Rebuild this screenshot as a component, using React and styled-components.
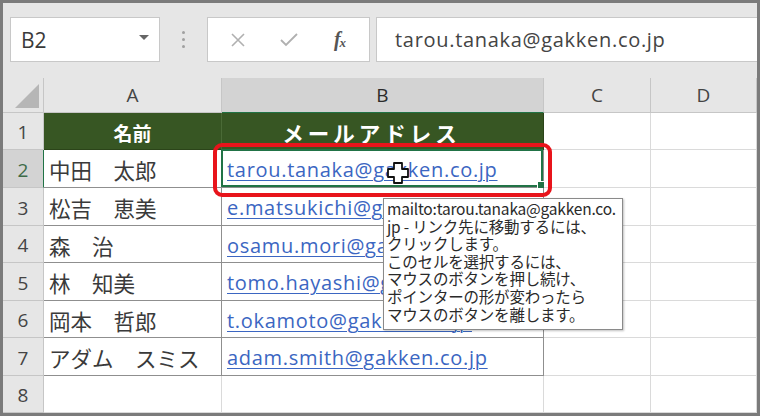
import React from 'react';
import styled, { createGlobalStyle } from 'styled-components';

const GlobalStyle = createGlobalStyle`
  html, body {
    margin: 0;
    padding: 0;
    background: #ffffff;
  }
  * {
    box-sizing: border-box;
  }
`;

const Frame = styled.div`
  width: 760px;
  height: 416px;
  border: 3px solid #7b7b7b;
  background: #e6e6e6;
  display: flex;
  flex-direction: column;
  overflow: hidden;
  font-family: "Open Sans", "Noto Sans CJK JP", sans-serif;
`;

const Toolbar = styled.div`
  height: 75px;
  flex: none;
  display: flex;
  align-items: flex-start;
  padding: 14px 0 0 7px;
`;

const NameBox = styled.div`
  width: 150px;
  height: 45px;
  background: #fff;
  border: 1px solid #c8c8c8;
  display: flex;
  align-items: center;
  justify-content: space-between;
  padding: 0 10px 0 10px;
  font-size: 21px;
  color: #3a3a3a;
`;

const Caret = styled.span`
  width: 0;
  height: 0;
  border-left: 5px solid transparent;
  border-right: 5px solid transparent;
  border-top: 5px solid #666;
  margin-top: -4px;
`;

const Dots = styled.div`
  width: 47px;
  height: 45px;
  display: flex;
  flex-direction: column;
  align-items: center;
  justify-content: center;
  gap: 4px;

  span {
    width: 3px;
    height: 3px;
    border-radius: 50%;
    background: #a0a0a0;
  }
`;

const FuncBox = styled.div`
  width: 163px;
  height: 45px;
  background: #fff;
  border: 1px solid #c8c8c8;
  display: grid;
  grid-template-columns: 1fr 1fr 1fr;
  align-items: center;
  justify-items: center;
  padding: 0 4px;
`;

const Fx = styled.span`
  font-family: "Liberation Serif", serif;
  font-style: italic;
  font-weight: bold;
  font-size: 20px;
  color: #555;
  letter-spacing: -1px;

  sub {
    font-size: 13px;
    vertical-align: -1px;
  }
`;

const FormulaInput = styled.div`
  flex: 1;
  height: 45px;
  margin-left: 6px;
  background: #fff;
  border-top: 1px solid #c8c8c8;
  border-bottom: 1px solid #c8c8c8;
  border-left: 1px solid #c8c8c8;
  display: flex;
  align-items: center;
  padding-left: 18px;
  font-size: 20px;
  letter-spacing: 0.7px;
  color: #444;
`;

const SheetWrap = styled.div`
  position: relative;
  flex: 1;
`;

const Grid = styled.div`
  display: grid;
  grid-template-columns: 41px 178px 322px 107px 1fr;
  grid-template-rows: 35px 37px 38px 38px 37px 38px 37px 38px 37px;
  background: #fff;
  height: 100%;
`;

const Corner = styled.div`
  background: #e6e6e6;
  border-right: 1px solid #c6c6c6;
  border-bottom: 1px solid #c6c6c6;
  position: relative;

  &::after {
    content: '';
    position: absolute;
    right: 4px;
    bottom: 4px;
    width: 24px;
    height: 24px;
    background: #b6b6b6;
    clip-path: polygon(100% 0, 100% 100%, 0 100%);
  }
`;

const ColHeader = styled.div`
  background: ${p => (p.$selected ? '#d3d3d3' : '#e6e6e6')};
  border-right: 1px solid #c6c6c6;
  border-bottom: 1px solid ${p => (p.$selected ? '#217346' : '#c6c6c6')};
  display: flex;
  align-items: center;
  justify-content: center;
  font-size: 19px;
  color: ${p => (p.$selected ? '#2b2b2b' : '#444')};
`;

const RowHeader = styled.div`
  background: ${p => (p.$selected ? '#d3d3d3' : '#e6e6e6')};
  border-right: 1px solid ${p => (p.$selected ? '#217346' : '#c6c6c6')};
  border-bottom: 1px solid #c6c6c6;
  display: flex;
  align-items: center;
  justify-content: center;
  font-size: 19px;
  color: ${p => (p.$selected ? '#3d6b48' : '#444')};
  padding-top: 2px;
`;

const HeadCell = styled.div`
  background: #375623;
  border-right: 1px solid ${p => (p.$last ? '#2b4419' : '#4a6a36')};
  border-bottom: 1px solid #2b4419;
  display: flex;
  align-items: center;
  justify-content: center;
  color: #fff;
  font-family: "Noto Sans CJK JP", sans-serif;
  font-weight: bold;
  font-size: ${p => p.$size || 19}px;
  padding: 2px ${p => p.$shift || 0}px 0 0;

  span {
    letter-spacing: ${p => p.$spacing || 0}px;
    margin-right: -${p => p.$spacing || 0}px;
  }
`;

const Cell = styled.div`
  background: #fff;
  border-right: 1px solid ${p => (p.$table ? '#8f8f8f' : '#dadada')};
  border-bottom: 1px solid ${p => (p.$table ? '#8f8f8f' : '#dadada')};
  display: flex;
  align-items: center;
  padding-left: 5px;
  padding-top: 2px;
  white-space: nowrap;
  overflow: visible;
  position: relative;
`;

const NameText = styled.span`
  font-family: "Noto Sans CJK JP", sans-serif;
  font-size: 21.5px;
  color: #3a3a3a;
`;

const LinkText = styled.span`
  font-family: "Open Sans", "Noto Sans CJK JP", sans-serif;
  font-size: 20px;
  letter-spacing: 0.7px;
  color: #3b66c2;
  text-decoration: underline;
  text-underline-offset: 3px;
  text-decoration-thickness: 1px;
`;

const Selection = styled.div`
  position: absolute;
  inset: -1px 0 0 -1px;
  border: 2px solid #217346;
  pointer-events: none;

  &::after {
    content: '';
    position: absolute;
    right: -5px;
    bottom: -5px;
    width: 7px;
    height: 7px;
    background: #217346;
    border: 1px solid #fff;
  }
`;

const Annotation = styled.div`
  position: absolute;
  left: 210px;
  top: 65px;
  width: 339px;
  height: 54px;
  border: 4px solid #e8141b;
  border-radius: 9px;
  pointer-events: none;
`;

const Cursor = styled.svg`
  position: absolute;
  left: 383px;
  top: 83px;
`;

const Tooltip = styled.div`
  position: absolute;
  left: 380px;
  top: 120px;
  width: 240px;
  height: 132px;
  background: #fff;
  border: 1px solid #8a8a8a;
  box-shadow: 1px 1px 2px rgba(0, 0, 0, 0.25);
  padding: 1px 0 0 3px;
  font-family: "Noto Sans CJK JP", sans-serif;
  font-size: 15.5px;
  line-height: 17.6px;
  color: #2a2a2a;
  white-space: pre;
  overflow: hidden;
  letter-spacing: -0.2px;
`;

const people = [
  ['中田　太郎', 'tarou.tanaka@gakken.co.jp'],
  ['松吉　恵美', 'e.matsukichi@gakken.co.jp'],
  ['森　治', 'osamu.mori@gakken.co.jp'],
  ['林　知美', 'tomo.hayashi@gakken.co.jp'],
  ['岡本　哲郎', 't.okamoto@gakken.co.jp'],
  ['アダム　スミス', 'adam.smith@gakken.co.jp'],
];

const tipLines = [
  'mailto:tarou.tanaka@gakken.co.',
  'jp - リンク先に移動するには、',
  'クリックします。',
  'このセルを選択するには、',
  'マウスのボタンを押し続け、',
  'ポインターの形が変わったら',
  'マウスのボタンを離します。',
];

export default function App() {
  return (
    <>
      <GlobalStyle />
      <Frame>
        <Toolbar>
          <NameBox>
            B2
            <Caret />
          </NameBox>
          <Dots>
            <span />
            <span />
            <span />
          </Dots>
          <FuncBox>
            <svg width="16" height="16" viewBox="0 0 16 16">
              <path d="M2 2 L14 14 M14 2 L2 14" stroke="#b0b0b0" strokeWidth="1.6" fill="none" />
            </svg>
            <svg width="20" height="16" viewBox="0 0 20 16">
              <path d="M2 8 L7 13 L18 2" stroke="#b0b0b0" strokeWidth="1.8" fill="none" />
            </svg>
            <Fx>
              f<sub>x</sub>
            </Fx>
          </FuncBox>
          <FormulaInput>tarou.tanaka@gakken.co.jp</FormulaInput>
        </Toolbar>
        <SheetWrap>
          <Grid>
            <Corner />
            <ColHeader>A</ColHeader>
            <ColHeader $selected>B</ColHeader>
            <ColHeader>C</ColHeader>
            <ColHeader>D</ColHeader>

            <RowHeader>1</RowHeader>
            <HeadCell>
              <span>名前</span>
            </HeadCell>
            <HeadCell $last $size={21.5} $spacing={4} $shift={26}>
              <span>メールアドレス</span>
            </HeadCell>
            <Cell />
            <Cell />

            {people.map(([name, mail], i) => (
              <React.Fragment key={mail}>
                <RowHeader $selected={i === 0}>{i + 2}</RowHeader>
                <Cell $table>
                  <NameText>{name}</NameText>
                </Cell>
                <Cell $table>
                  <LinkText>{mail}</LinkText>
                  {i === 0 && <Selection />}
                </Cell>
                <Cell />
                <Cell />
              </React.Fragment>
            ))}

            <RowHeader>8</RowHeader>
            <Cell />
            <Cell />
            <Cell />
            <Cell />
          </Grid>
          <Annotation />
          <Cursor width="24" height="24" viewBox="0 0 24 24">
            <path
              d="M8 2 H16 V8 H22 V16 H16 V22 H8 V16 H2 V8 H8 Z"
              fill="#fff"
              stroke="#111"
              strokeWidth="1.8"
              strokeLinejoin="round"
            />
          </Cursor>
          <Tooltip>{tipLines.join('\n')}</Tooltip>
        </SheetWrap>
      </Frame>
    </>
  );
}
